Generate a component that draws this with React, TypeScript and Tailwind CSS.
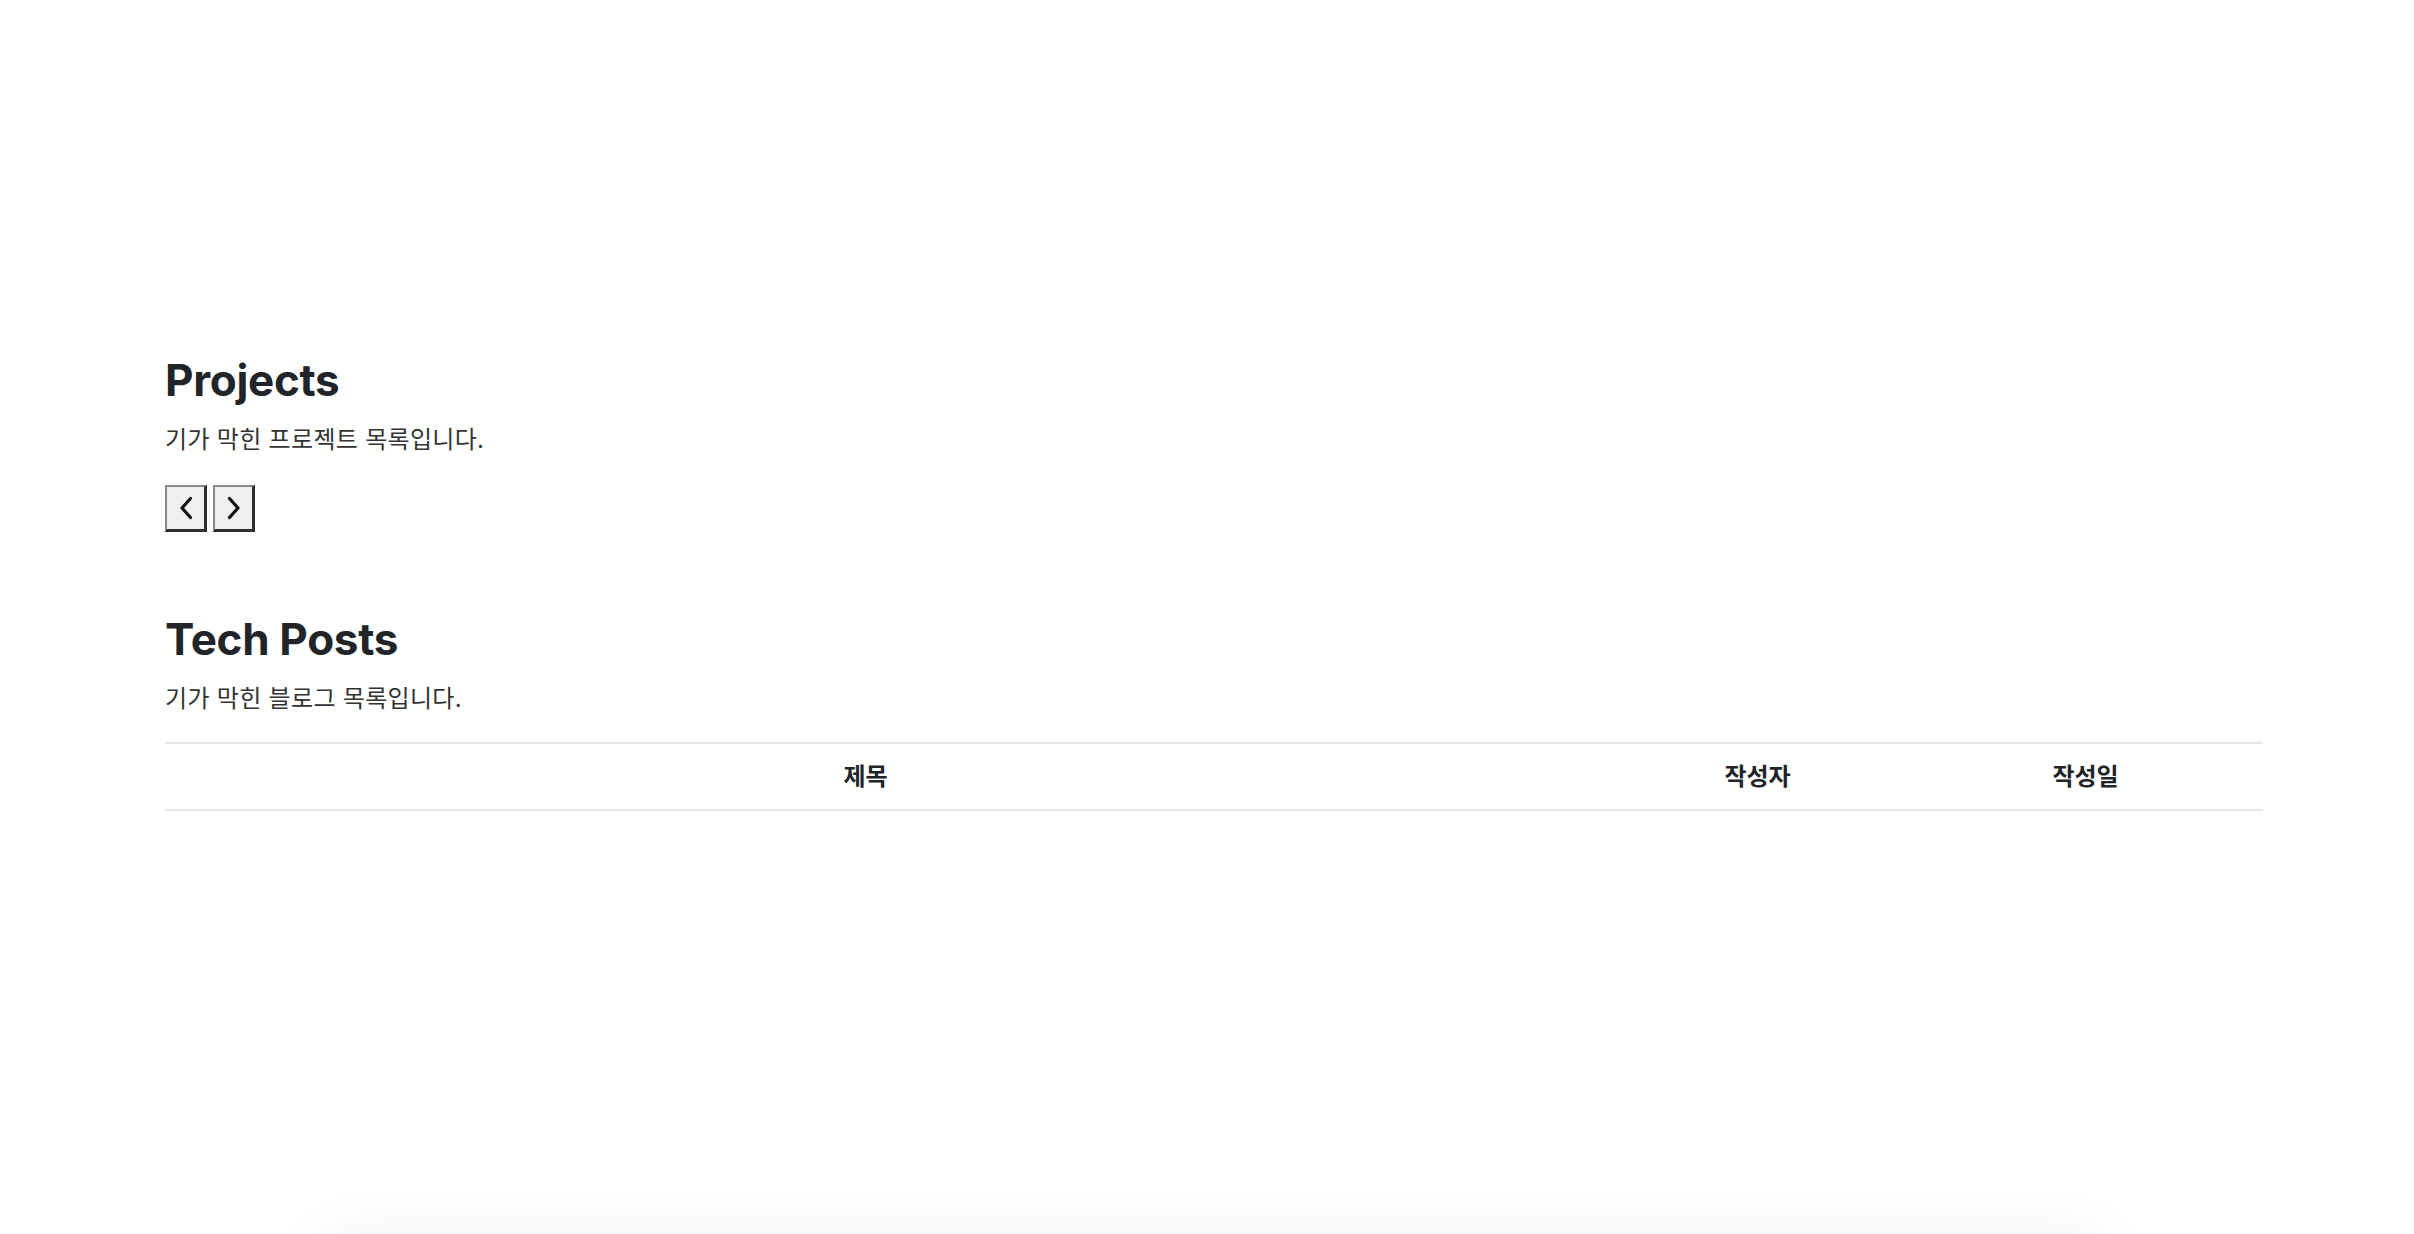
import React from "react";

function Chevron({ dir }: { dir: "left" | "right" }) {
  return (
    <svg width="16" height="24" viewBox="0 0 16 24" fill="none" aria-hidden="true">
      {dir === "left" ? (
        <polyline points="12.5,2.5 4,12 12.5,21.5" stroke="#111" strokeWidth="3.2" strokeLinecap="round" strokeLinejoin="round" />
      ) : (
        <polyline points="3.5,2.5 12,12 3.5,21.5" stroke="#111" strokeWidth="3.2" strokeLinecap="round" strokeLinejoin="round" />
      )}
    </svg>
  );
}

export default function App() {
  return (
    <div className="h-screen overflow-hidden bg-white text-[#212529] font-['Inter','Noto_Sans_CJK_KR',sans-serif]">
      <main className="ml-[165px] w-[2098px] pt-[354px]">
        <section>
          <h2 className="text-[44px] leading-[53px] font-bold tracking-[-0.3px] text-[#212529]">Projects</h2>
          <p className="mt-[16px] text-[24px] leading-[33px] tracking-[0.3px] text-[#333]">기가 막힌 프로젝트 목록입니다.</p>
          <div className="mt-[29px] flex gap-[6px]">
            <button
              type="button"
              aria-label="이전"
              className="flex h-[47px] w-[42px] items-center justify-center border-t-2 border-l-2 border-r-[3px] border-b-[3px] border-t-[#8a8a8a] border-l-[#8a8a8a] border-r-[#2e2e2e] border-b-[#2e2e2e] bg-[#efefef]"
            >
              <Chevron dir="left" />
            </button>
            <button
              type="button"
              aria-label="다음"
              className="flex h-[47px] w-[42px] items-center justify-center border-t-2 border-l-2 border-r-[3px] border-b-[3px] border-t-[#8a8a8a] border-l-[#8a8a8a] border-r-[#2e2e2e] border-b-[#2e2e2e] bg-[#efefef]"
            >
              <Chevron dir="right" />
            </button>
          </div>
        </section>

        <section className="mt-[81px]">
          <h2 className="text-[44px] leading-[53px] font-bold tracking-[-0.3px] text-[#212529]">Tech Posts</h2>
          <p className="mt-[16px] text-[24px] leading-[33px] tracking-[0.3px] text-[#333]">기가 막힌 블로그 목록입니다.</p>
          <div className="mt-[27px] grid h-[69px] grid-cols-[1401px_383px_1fr] items-center border-y-2 border-[#e6e6e8] text-[24px] font-bold text-[#212529]">
            <div className="text-center">제목</div>
            <div className="text-center">작성자</div>
            <div className="pr-[41px] text-center">작성일</div>
          </div>
        </section>

        <div className="mx-auto mt-[430px] h-[200px] w-[1780px] rounded-[24px] bg-white shadow-[0_0_60px_rgba(0,0,0,0.09)]" />
      </main>
    </div>
  );
}
